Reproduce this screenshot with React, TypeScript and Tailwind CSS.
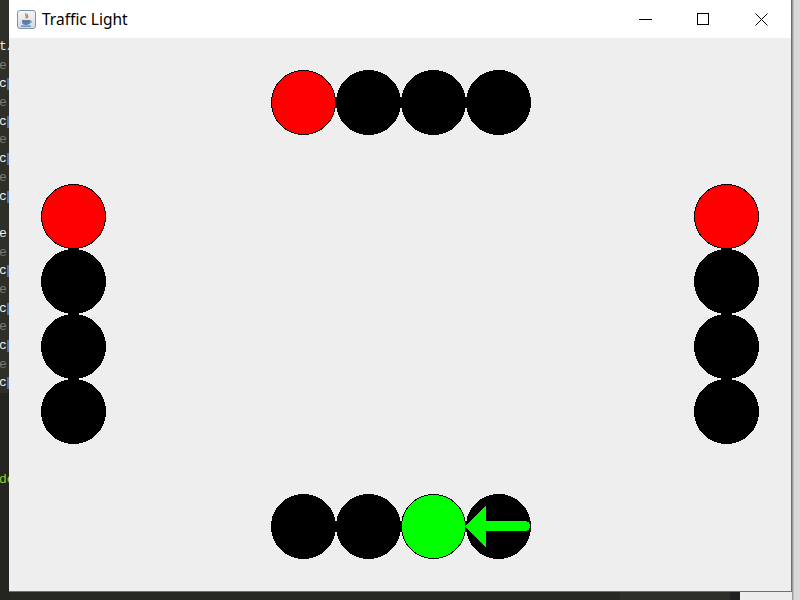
import React from "react";

const codeRows: { t: string; c: string; bar?: boolean }[] = [
  { t: "t/", c: "#e6e6e6" },
  { t: "e", c: "#7a7a6a" },
  { t: "c", c: "#f0f0f0", bar: true },
  { t: "e", c: "#7a7a6a" },
  { t: "c", c: "#f0f0f0", bar: true },
  { t: "e", c: "#7a7a6a" },
  { t: "c", c: "#f0f0f0", bar: true },
  { t: "e", c: "#7a7a6a" },
  { t: "c", c: "#f0f0f0", bar: true },
  { t: "", c: "#f0f0f0" },
  { t: "e", c: "#f0f0f0" },
  { t: "e", c: "#7a7a6a" },
  { t: "c", c: "#f0f0f0", bar: true },
  { t: "e", c: "#7a7a6a" },
  { t: "c", c: "#f0f0f0", bar: true },
  { t: "e", c: "#7a7a6a" },
  { t: "c", c: "#f0f0f0", bar: true },
  { t: "e", c: "#7a7a6a" },
  { t: "c", c: "#f0f0f0", bar: true },
];

function Light({ x, y, fill }: { x: number; y: number; fill: string }) {
  return <circle cx={x + 32.5} cy={y + 32.5} r={32} fill={fill} stroke="#000" strokeWidth={1} />;
}

function Canvas() {
  const top = [262, 327, 392, 457];
  const col = [146, 211, 276, 341];
  return (
    <svg width="782" height="553" viewBox="0 0 782 553" className="block" shapeRendering="crispEdges">
      {top.map((x, i) => (
        <Light key={"t" + i} x={x} y={32} fill={i === 0 ? "#ff0000" : "#000000"} />
      ))}
      {col.map((y, i) => (
        <Light key={"l" + i} x={32} y={y} fill={i === 0 ? "#ff0000" : "#000000"} />
      ))}
      {col.map((y, i) => (
        <Light key={"r" + i} x={685} y={y} fill={i === 0 ? "#ff0000" : "#000000"} />
      ))}
      {top.map((x, i) => (
        <Light key={"b" + i} x={x} y={456} fill={i === 2 ? "#00ff00" : "#000000"} />
      ))}
      <polygon points="456,488.5 477,467.5 477,509.5" fill="#00ff00" />
      <line x1="476" y1="488" x2="516" y2="488" stroke="#00ff00" strokeWidth="10" strokeLinecap="round" />
    </svg>
  );
}

function JavaIcon() {
  return (
    <svg width="19" height="19" viewBox="0 0 19 19">
      <defs>
        <linearGradient id="jg" x1="0" y1="0" x2="0" y2="1">
          <stop offset="0" stopColor="#f4f7fa" />
          <stop offset="1" stopColor="#cfdae6" />
        </linearGradient>
      </defs>
      <rect x="0.5" y="0.5" width="18" height="18" rx="2.5" fill="url(#jg)" stroke="#7f93a8" />
      <path d="M9 3 C7.5 5 10.5 6 9 8.5 M10.5 4 C9.5 5.5 11.5 6.2 10.4 8" stroke="#e8731a" strokeWidth="1.2" fill="none" />
      <path d="M5 10 H13 V12 C13 14 11.5 15 9 15 C6.5 15 5 14 5 12 Z" fill="#5a7fa8" />
      <path d="M13 10.8 C15 10.8 15 13 12.6 13" stroke="#5a7fa8" strokeWidth="1" fill="none" />
      <rect x="4" y="15.6" width="10" height="1.2" rx="0.6" fill="#5a7fa8" />
    </svg>
  );
}

export default function App() {
  return (
    <div className="w-[800px] h-[600px] flex bg-[#272822] overflow-hidden" style={{ fontFamily: "'Liberation Mono', monospace" }}>
      {/* IDE strip on the left */}
      <div className="w-[9px] h-[600px] flex flex-col bg-[#2f2f2a]">
        <div className="h-[38px]" />
        <div className="flex flex-col">
          {codeRows.map((r, i) => (
            <div key={i} className="h-[18.7px] relative overflow-hidden text-[13px] leading-[18px] -ml-[1px]" style={{ color: r.c }}>
              {r.t}
              {r.bar && <span className="absolute right-0 top-[3px] w-[2px] h-[12px] bg-[#4a6fa5]" />}
            </div>
          ))}
        </div>
        <div className="flex-1 bg-[#242420] relative overflow-hidden">
          <div className="absolute top-[78px] -left-[1px] text-[13px] leading-[18px] text-[#9acd32]">de</div>
        </div>
      </div>

      {/* Window */}
      <div className="w-[783px] flex flex-col">
        <div className="h-[592px] flex flex-col border-r border-b border-[#6e6e6e] bg-white">
          <div className="h-[38px] flex items-center bg-white" style={{ fontFamily: "'Noto Sans', sans-serif" }}>
            <div className="ml-[8px] mt-[1px]">
              <JavaIcon />
            </div>
            <div className="ml-[6px] mt-[2px] text-[15.5px] text-black leading-none">Traffic Light</div>
            <div className="ml-auto flex items-center h-full">
              <div className="w-[58px] flex justify-center">
                <div className="w-[13px] h-[1px] bg-black" />
              </div>
              <div className="w-[58px] flex justify-center">
                <div className="w-[12px] h-[12px] border border-black" />
              </div>
              <div className="w-[58px] flex justify-center mr-[1px]">
                <svg width="13" height="13" viewBox="0 0 13 13">
                  <path d="M0.5 0.5 L12.5 12.5 M12.5 0.5 L0.5 12.5" stroke="#000" strokeWidth="1" />
                </svg>
              </div>
            </div>
          </div>
          <div className="flex-1 bg-[#eeeeee]">
            <Canvas />
          </div>
        </div>
        <div className="h-[8px] flex">
          <div className="w-[611px] bg-[#272822]" />
          <div className="w-[110px] bg-[#2e2e2a]" />
          <div className="w-[10px] bg-[#202020]" />
          <div className="flex-1 bg-[#ececec]" />
        </div>
      </div>

      {/* Right shadow strip */}
      <div className="w-[8px] h-[600px] flex">
        <div className="w-[1px] bg-[#9a9a9a]" />
        <div className="w-[1px] bg-[#bdbdbd]" />
        <div className="flex-1 bg-[#d8d8d8]" />
      </div>
    </div>
  );
}
